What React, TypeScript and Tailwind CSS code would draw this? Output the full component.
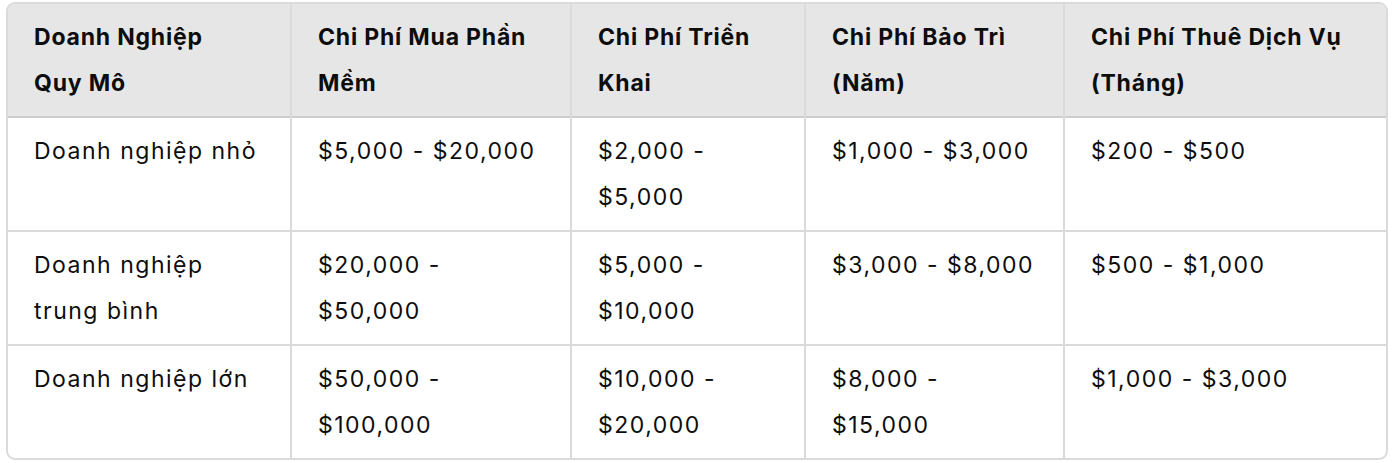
import React from "react";

const headers = [
  "Doanh Nghiệp Quy Mô",
  "Chi Phí Mua Phần Mềm",
  "Chi Phí Triển Khai",
  "Chi Phí Bảo Trì (Năm)",
  "Chi Phí Thuê Dịch Vụ (Tháng)",
];

const rows = [
  ["Doanh nghiệp nhỏ", "$5,000 - $20,000", "$2,000 - $5,000", "$1,000 - $3,000", "$200 - $500"],
  ["Doanh nghiệp trung bình", "$20,000 - $50,000", "$5,000 - $10,000", "$3,000 - $8,000", "$500 - $1,000"],
  ["Doanh nghiệp lớn", "$50,000 - $100,000", "$10,000 - $20,000", "$8,000 - $15,000", "$1,000 - $3,000"],
];

const widths = [283, 280, 234, 259, 326];

export default function App() {
  return (
    <div
      className="w-[1399px] h-[463px] bg-white pl-[6px] pt-[2px]"
      style={{ fontFamily: "Inter, 'Noto Sans', sans-serif" }}
    >
      <div className="w-[1382px] rounded-[9px] border-2 border-[#dadada] overflow-hidden">
        <table className="table-fixed border-collapse w-full text-[#0d0d0d] text-[23px] leading-[46px] tracking-[1.5px]">
          <colgroup>
            {widths.map((w, i) => (
              <col key={i} style={{ width: w }} />
            ))}
          </colgroup>
          <thead>
            <tr className="bg-[#e6e6e6] border-b-2 border-[#cdcdcd]">
              {headers.map((h, i) => (
                <th
                  key={i}
                  className="text-left align-top font-bold tracking-[0.8px] pl-[26px] pr-[36px] py-[10px] border-l-2 border-[#dadada] first:border-l-0"
                >
                  {h}
                </th>
              ))}
            </tr>
          </thead>
          <tbody>
            {rows.map((r, ri) => (
              <tr key={ri} className="border-t-2 border-[#dadada] first:border-t-0">
                {r.map((c, ci) => (
                  <td
                    key={ci}
                    className="align-top font-normal pl-[26px] pr-[20px] py-[10px] border-l-2 border-[#dadada] first:border-l-0"
                  >
                    {c}
                  </td>
                ))}
              </tr>
            ))}
          </tbody>
        </table>
      </div>
    </div>
  );
}
